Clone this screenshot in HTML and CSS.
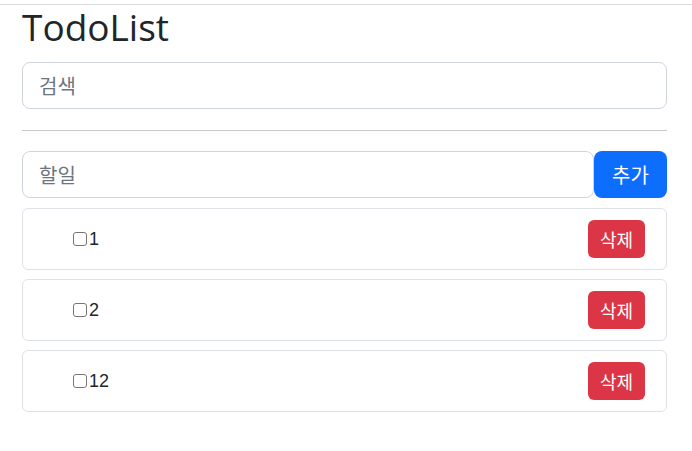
FILE: index.html
```html
<!DOCTYPE html>
<html lang="ko">
<head>
<meta charset="utf-8">
<title>TodoList</title>
<link rel="stylesheet" href="styles.css">
</head>
<body>
<div class="topbar"></div>
<main class="container">
  <h1 class="title">TodoList</h1>
  <input class="field search" type="text" placeholder="검색">
  <hr class="divider">
  <div class="add-row">
    <input class="field add-input" type="text" placeholder="할일">
    <button class="btn btn-add">추가</button>
  </div>
  <ul class="todo-list">
    <li class="todo-item">
      <label class="todo-label"><input type="checkbox" class="todo-check">1</label>
      <button class="btn btn-delete">삭제</button>
    </li>
    <li class="todo-item">
      <label class="todo-label"><input type="checkbox" class="todo-check">2</label>
      <button class="btn btn-delete">삭제</button>
    </li>
    <li class="todo-item">
      <label class="todo-label"><input type="checkbox" class="todo-check">12</label>
      <button class="btn btn-delete">삭제</button>
    </li>
  </ul>
</main>
</body>
</html>
```
FILE: styles.css
```css
* { box-sizing: border-box; }
html, body { margin: 0; padding: 0; background: #fff; }
body {
  font-family: "Open Sans", "Noto Sans CJK KR", sans-serif;
  color: #212529;
}
.topbar {
  height: 5px;
  border-bottom: 1px solid #dcdcdc;
}
.container {
  padding: 0 25px 0 22px;
}
.title {
  margin: 0;
  font-size: 37px;
  font-weight: 400;
  line-height: 43px;
  color: #212529;
}
.field {
  display: block;
  width: 100%;
  height: 47px;
  padding: 0 16px;
  font-family: "Noto Sans CJK KR", sans-serif;
  font-size: 20px;
  color: #212529;
  border: 1px solid #ced4da;
  border-radius: 8px;
  background: #fff;
  outline: none;
}
.field::placeholder { color: #6c757d; }
.search { margin-top: 14px; }
.divider {
  margin: 21px 0 20px;
  border: 0;
  border-top: 1px solid #c8c9ca;
}
.add-row {
  display: flex;
}
.add-input { flex: 1; width: auto; }
.btn {
  border: 0;
  color: #fff;
  font-family: "Noto Sans CJK KR", sans-serif;
  cursor: pointer;
}
.btn-add {
  width: 73px;
  height: 47px;
  font-size: 20px;
  background: #0d6efd;
  border-radius: 8px;
}
.todo-list {
  list-style: none;
  margin: 10px 0 0;
  padding: 0;
  display: flex;
  flex-direction: column;
  gap: 10px;
}
.todo-item {
  display: flex;
  align-items: center;
  justify-content: space-between;
  padding: 11px 21px 11px 50px;
  border: 1px solid #dee2e6;
  border-radius: 6px;
}
.todo-item + .todo-item { margin-top: -1px; }
.todo-label {
  display: flex;
  align-items: center;
  font-family: "Liberation Sans", sans-serif;
  font-size: 18px;
  color: #212529;
}
.todo-check {
  appearance: none;
  -webkit-appearance: none;
  margin: 0 2px 0 0;
  width: 14px;
  height: 14px;
  border: 1px solid #767676;
  border-radius: 3px;
  background: #fff;
}
.btn-delete {
  width: 57px;
  height: 38px;
  padding: 0;
  font-size: 18px;
  background: #dc3545;
  border-radius: 6px;
}
```
